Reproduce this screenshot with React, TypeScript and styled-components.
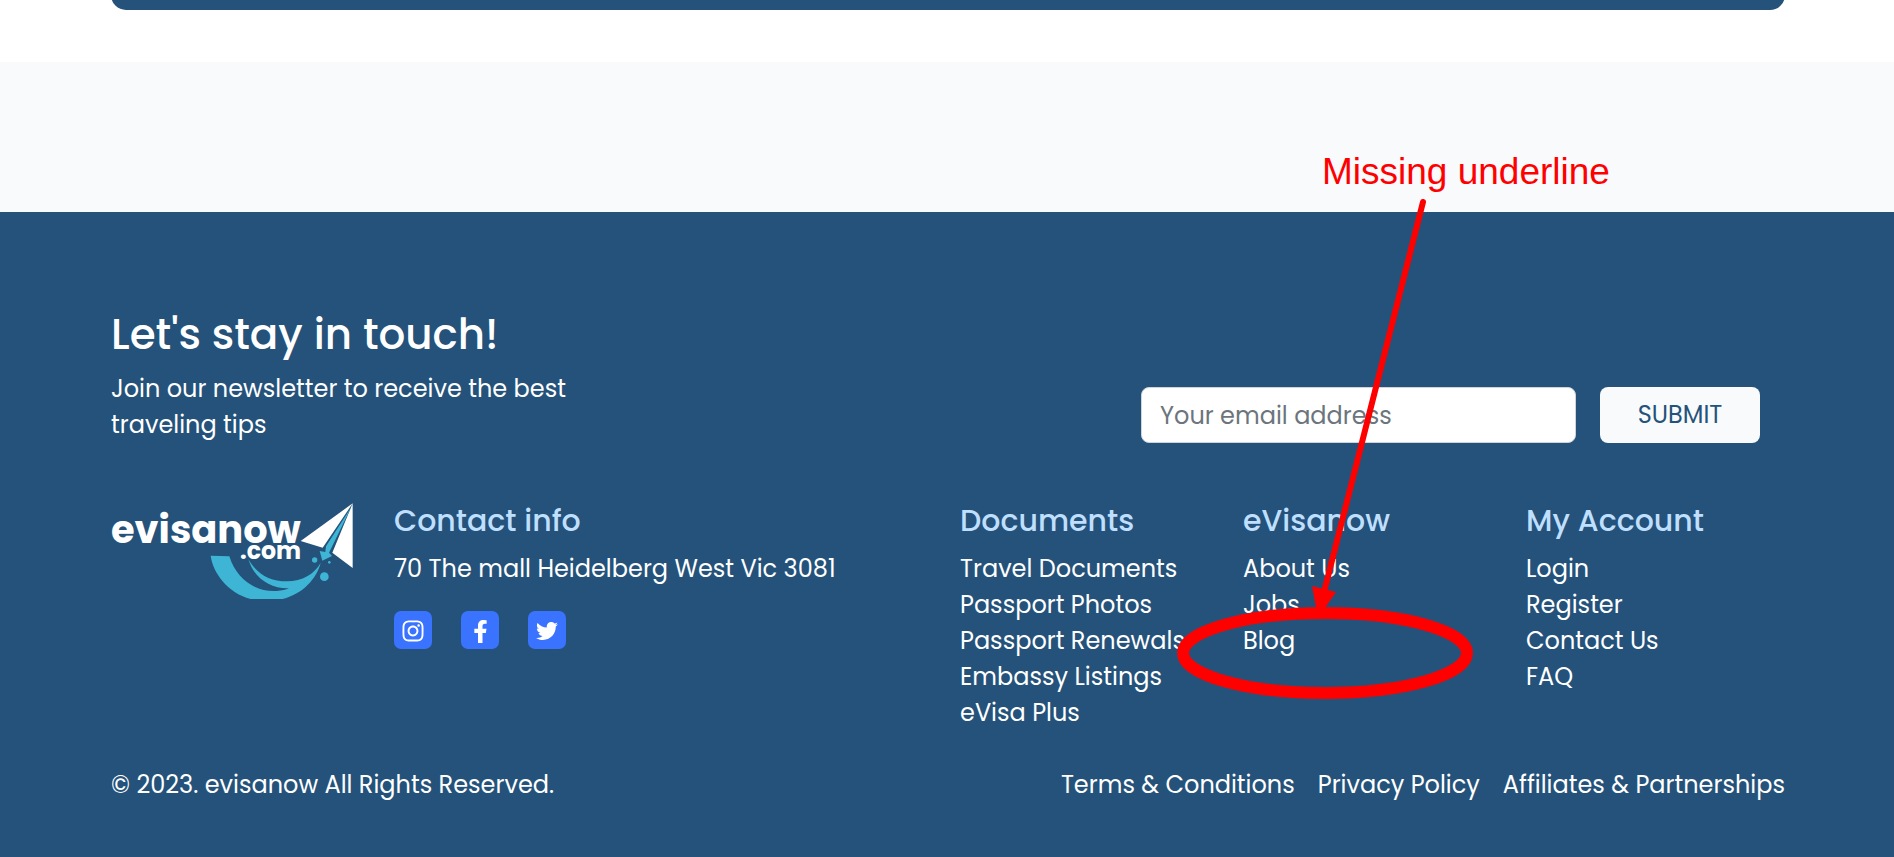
import React from "react";
import styled, { createGlobalStyle } from "styled-components";
import { FaFacebookF, FaInstagram, FaTwitter } from "react-icons/fa";

const navy = "#24527a";
const mist = "#f8fafc";
const sky = "#bfdfff";

const GlobalStyle = createGlobalStyle`
  *, *::before, *::after { box-sizing: border-box; }
  body { margin: 0; background: #fff; }
  h2, h3, p, ul { margin: 0; padding: 0; font-weight: inherit; }
  ul { list-style: none; }
`;

const Page = styled.div`
  position: relative;
  display: flex;
  flex-direction: column;
  min-height: 100vh;
  overflow: hidden;
  font-family: Poppins, Inter, sans-serif;
  font-size: 24px;
  line-height: 36px;
  color: #fff;
`;

const CardSection = styled.section`
  padding: 0 109px 52px 111px;
`;

const CardEnd = styled.div`
  height: 40px;
  margin-top: -30px;
  border-radius: 15px;
  background: ${navy};
`;

const Band = styled.div`
  height: 150px;
  background: ${mist};
`;

const Footer = styled.footer`
  flex: 1;
  padding: 97px 109px 48px 111px;
  background: ${navy};
`;

const Newsletter = styled.section`
  display: flex;
  justify-content: space-between;
  align-items: flex-end;
`;

const Intro = styled.div`
  width: 500px;
`;

const Title = styled.h2`
  margin-bottom: 10px;
  font-size: 42px;
  line-height: 52px;
  font-weight: 500;
`;

const SignupForm = styled.form`
  display: flex;
  gap: 24px;
  padding-right: 25px;
`;

const EmailInput = styled.input`
  width: 435px;
  height: 56px;
  padding: 0 18px;
  border: 1px solid #ced4da;
  border-radius: 8px;
  background: #fff;
  font: inherit;
  color: #212529;
  &::placeholder { color: #6c757d; opacity: 1; }
`;

const SubmitButton = styled.button`
  width: 160px;
  height: 56px;
  padding: 0;
  border: 0;
  border-radius: 8px;
  background: ${mist};
  font: inherit;
  color: ${navy};
`;

const Columns = styled.div`
  display: grid;
  grid-template-columns: repeat(6, minmax(0, 1fr));
  column-gap: 24px;
  margin-top: 60px;
`;

const Column = styled.section<{ $span?: number }>`
  grid-column: span ${(p) => p.$span ?? 1};
`;

const ColumnTitle = styled.h3`
  margin-bottom: 12px;
  font-size: 30px;
  line-height: 36px;
  font-weight: 500;
  color: ${sky};
`;

const FooterLink = styled.a`
  color: inherit;
  text-decoration: none;
  white-space: nowrap;
`;

const Address = styled.p`
  white-space: nowrap;
`;

const Socials = styled.div`
  display: flex;
  gap: 29px;
  margin-top: 24px;
`;

const SocialLink = styled.a`
  display: flex;
  align-items: center;
  justify-content: center;
  width: 38px;
  height: 38px;
  padding-top: 2px;
  border-radius: 7px;
  background: #3a73ff;
  color: #fff;
`;

const Legal = styled.div`
  display: flex;
  justify-content: space-between;
  margin-top: 36px;
`;

const LegalLinks = styled.nav`
  display: flex;
  gap: 23px;
`;

const LogoSvg = styled.svg`
  display: block;
  font-family: Poppins, Inter, sans-serif;
  font-weight: 700;
`;

const Note = styled.div`
  position: absolute;
  top: 151px;
  left: 1322px;
  font-family: "Liberation Sans", Arial, sans-serif;
  font-size: 37px;
  line-height: 42px;
  white-space: nowrap;
  color: #f00;
`;

const Marks = styled.svg`
  position: absolute;
  top: 190px;
  left: 1170px;
  pointer-events: none;
`;

function Logo() {
  return (
    <LogoSvg width="242" height="96" viewBox="63 72 726 288" role="img" aria-label="evisanow.com">
      <path
        fill="#3eb5d5"
        d="M362 230 L418 232 C438 298 495 340 560 336 C575 335 588 332 597 328 C540 330 490 295 475 240 C500 285 540 307 590 307 C638 307 672 285 692 252 C676 310 620 366 528 366 C430 366 370 290 362 230Z"
      />
      <path fill="#fff" d="M632 186 L788 73 L698 206Z M788 73 V267 L727 221Z" />
      <path fill="#3eb5d5" d="M784 84 L708 202 L706 219 L689 216 L697 245 L726 231 L717 221Z" />
      <circle cx="674" cy="243" r="8" fill="#3eb5d5" />
      <circle cx="718" cy="250" r="4" fill="#3eb5d5" />
      <circle cx="703" cy="293" r="13" fill="#3eb5d5" />
      <text x="63" y="191" fontSize="115" fill="#fff">evisanow</text>
      <text x="450" y="239" fontSize="71" fill="#fff">.com</text>
    </LogoSvg>
  );
}

const linkColumns = [
  {
    title: "Documents",
    links: ["Travel Documents", "Passport Photos", "Passport Renewals", "Embassy Listings", "eVisa Plus"],
  },
  { title: "eVisanow", links: ["About Us", "Jobs", "Blog"] },
  { title: "My Account", links: ["Login", "Register", "Contact Us", "FAQ"] },
];

export default function App() {
  return (
    <Page>
      <GlobalStyle />
      <CardSection>
        <CardEnd />
      </CardSection>
      <Band />
      <Footer>
        <Newsletter>
          <Intro>
            <Title>Let's stay in touch!</Title>
            <p>Join our newsletter to receive the best traveling tips</p>
          </Intro>
          <SignupForm onSubmit={(e) => e.preventDefault()}>
            <EmailInput type="email" aria-label="Your email address" placeholder="Your email address" />
            <SubmitButton type="submit">SUBMIT</SubmitButton>
          </SignupForm>
        </Newsletter>
        <Columns>
          <Column>
            <Logo />
          </Column>
          <Column $span={2}>
            <ColumnTitle>Contact info</ColumnTitle>
            <Address>70 The mall Heidelberg West Vic 3081</Address>
            <Socials>
              <SocialLink href="#" aria-label="Instagram"><FaInstagram size={24} /></SocialLink>
              <SocialLink href="#" aria-label="Facebook"><FaFacebookF size={23} /></SocialLink>
              <SocialLink href="#" aria-label="Twitter"><FaTwitter size={22} /></SocialLink>
            </Socials>
          </Column>
          {linkColumns.map((column) => (
            <Column key={column.title}>
              <ColumnTitle>{column.title}</ColumnTitle>
              <ul>
                {column.links.map((link) => (
                  <li key={link}><FooterLink href="#">{link}</FooterLink></li>
                ))}
              </ul>
            </Column>
          ))}
        </Columns>
        <Legal>
          <p>© 2023. evisanow All Rights Reserved.</p>
          <LegalLinks>
            <FooterLink href="#">Terms &amp; Conditions</FooterLink>
            <FooterLink href="#">Privacy Policy</FooterLink>
            <FooterLink href="#">Affiliates &amp; Partnerships</FooterLink>
          </LegalLinks>
        </Legal>
      </Footer>
      <Note>Missing underline</Note>
      <Marks width="310" height="520" viewBox="1170 190 310 520" aria-hidden="true">
        <path d="M1423 202 L1324 592" stroke="#f00" strokeWidth="6" strokeLinecap="round" />
        <path d="M1312 586 L1336 592 L1318 618Z" fill="#f00" />
        <ellipse cx="1325" cy="653" rx="142" ry="40" fill="none" stroke="#f00" strokeWidth="12" />
      </Marks>
    </Page>
  );
}
